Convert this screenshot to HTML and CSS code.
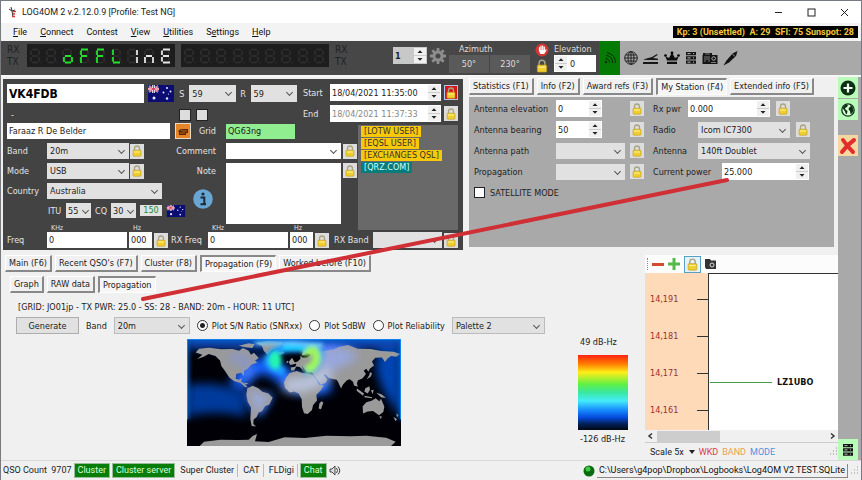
FILE: index.html
```html
<!DOCTYPE html>
<html lang="en">
<head>
<meta charset="utf-8">
<title>LOG4OM 2</title>
<link rel="stylesheet" href="styles.css">
</head>
<body>
<svg class="defs" width="0" height="0" aria-hidden="true">
  <symbol id="lock" viewBox="0 0 12 12"><path d="M3.5 6V3.500a2.500 2.500 0 0 1 5 0V6" fill="none" stroke="#aaa484" stroke-width="1.3"/><rect x="2" y="5.2" width="8" height="6" rx=".8" fill="#efcf2d" stroke="#bd9b22" stroke-width=".6"/><path d="M3 7h6" stroke="#fff29b"/></symbol>
  <symbol id="spin" viewBox="0 0 12 15"><rect width="12" height="15" fill="#f0f0f0"/><path d="M0 7.5h12" stroke="#bbb" stroke-width=".7"/><path d="M3.5 5 6 2.3 8.500 5zM3.500 10 6 12.700 8.500 10z" fill="#222"/></symbol>
  <symbol id="flag" viewBox="0 0 26 17"><rect width="26" height="17" fill="#0b0d72"/><path d="M1 1l9 6M10 1 1 7" stroke="#eee" stroke-width="1.600"/><path d="M5.500 0v8M0 4h11" stroke="#fff" stroke-width="2.600"/><path d="M5.500 0v8M0 4h11M1 1l9 6M10 1 1 7" stroke="#d43655" stroke-width=".9"/><g fill="#e6e9ff"><circle cx="6" cy="13" r="1.500"/><circle cx="19" cy="3" r="1"/><circle cx="15.500" cy="7.500" r="1"/><circle cx="22.500" cy="6.500" r="1"/><circle cx="20.500" cy="9" r=".6"/><circle cx="19" cy="13.500" r="1.200"/></g></symbol>
  <symbol id="seg" viewBox="0 0 12 16"><path d="M2 1.500H8M9 2.500V7M9 9V13.500M2 14.500H8M1 9V13.500M1 2.500V7M2 8H8M10.500 14.500h1" fill="none" stroke="currentColor" stroke-width="1.600"/></symbol>
  <symbol id="rack" viewBox="0 0 12 14"><path d="M1 1h10v3.200H1zM1 5.300h10v3.200H1zM1 9.600h10v3.200H1z" fill="#151515"/><path d="M2.500 2.600h3M2.500 6.900h3M2.500 11.200h3M8 2.600h1M8 6.900h1M8 11.200h1" stroke="#ccc" stroke-width=".9"/></symbol>
</svg>
<div class="app">
  <header class="title">
    <svg width="10" height="12" viewBox="0 0 10 12"><path d="M1 3l3 2 1 6M4 5l3-1M3 1l1 4" fill="none" stroke="#333"/><path d="M5 5.500h3M5 8h2M4 10.500h3" stroke="#d33" stroke-width="1.500"/></svg>
    <span class="grow">LOG4OM 2 v.2.12.0.9 [Profile: Test NG]</span>
    <button aria-label="Minimize"><svg width="9" height="9"><path d="M1 4.500h7" stroke="#222"/></svg></button>
    <button aria-label="Maximize"><svg width="9" height="9"><rect x="1" y="1" width="7" height="7" fill="none" stroke="#222"/></svg></button>
    <button aria-label="Close"><svg width="9" height="9"><path d="M1 1l7 7M8 1 1 8" stroke="#222"/></svg></button>
  </header>
  <nav class="menu">
    <a href="#"><u>F</u>ile</a><a href="#"><u>C</u>onnect</a><a href="#">Contest</a><a href="#"><u>V</u>iew</a><a href="#"><u>U</u>tilities</a><a href="#">S<u>e</u>ttings</a><a href="#"><u>H</u>elp</a>
    <span class="kp">Kp: 3 (Unsettled)&nbsp; A: 29&nbsp; SFI: 75 Sunspot: 28</span>
  </nav>
  <div class="toolbar">
    <div class="radio">
      <div class="rxtx"><span>RX</span><span>TX</span></div>
      <svg class="display" viewBox="0 0 148 23" role="img" aria-label="oFFLInE">
        <rect width="148" height="23" fill="#1d1d1d"/>
        <g color="#303030"><use href="#seg" x="3" y="4" width="12" height="16"/><use href="#seg" x="19" y="4" width="12" height="16"/><use href="#seg" x="35" y="4" width="12" height="16"/><use href="#seg" x="52" y="4" width="12" height="16"/><use href="#seg" x="68" y="4" width="12" height="16"/><use href="#seg" x="84" y="4" width="12" height="16"/><use href="#seg" x="100" y="4" width="12" height="16"/><use href="#seg" x="117" y="4" width="12" height="16"/><use href="#seg" x="133" y="4" width="12" height="16"/></g>
        <g fill="none" stroke="#1ee32b" stroke-width="1.800"><path d="M38 12h6M45 13v5M38 18.500h6M37 13v5"/><path d="M54 5.500h7M54 6.500V11M54 12h6M54 13v6"/><path d="M70 5.500h7M70 6.500V11M70 12h6M70 13v6"/><path d="M86 5.500V11M86 13v4.500M86 18.500h7"/></g>
        <g fill="none" stroke="#e4e4e4" stroke-width="1.800"><path d="M110 6v5M110 13v6"/><path d="M118 13v6M119 12h6M126 13v6"/><path d="M136 5.500h7M135 6.500V11M136 12h6M135 13v4.500M136 18.500h7"/></g>
      </svg>
      <svg class="display" viewBox="0 0 148 23" role="img" aria-label="Second VFO">
        <rect width="148" height="23" fill="#1d1d1d"/>
        <g color="#303030"><use href="#seg" x="3" y="4" width="12" height="16"/><use href="#seg" x="19" y="4" width="12" height="16"/><use href="#seg" x="35" y="4" width="12" height="16"/><use href="#seg" x="52" y="4" width="12" height="16"/><use href="#seg" x="68" y="4" width="12" height="16"/><use href="#seg" x="84" y="4" width="12" height="16"/><use href="#seg" x="100" y="4" width="12" height="16"/><use href="#seg" x="117" y="4" width="12" height="16"/><use href="#seg" x="133" y="4" width="12" height="16"/></g>
      </svg>
      <div class="rxtx"><span>RX</span><span>TX</span></div>
    </div>
    <div class="rotor">
      <span class="num vfo"><input aria-label="Radio number" value="1"><svg><use href="#spin"/></svg></span>
      <svg class="gear" viewBox="0 0 16 16"><circle cx="8" cy="8" r="4" fill="none" stroke="#8d8d8d" stroke-width="3"/><path d="M8 0v3M8 13v3M0 8h3M13 8h3M2.300 2.300l2.200 2.200M11.500 11.500l2.200 2.200M13.700 2.300l-2.200 2.200M4.500 11.500l-2.200 2.200" stroke="#8d8d8d" stroke-width="2.800"/></svg>
      <div class="azimuth"><span>Azimuth</span><div class="pair"><button>50°</button><button>230°</button></div></div>
      <div class="stops">
        <svg viewBox="0 0 14 14"><circle cx="7" cy="7" r="6.500" fill="#d83535"/><path d="M4.500 8V4.500M6 7V3M7.700 7V3M9.300 7V4M4.300 7l1.500 3.500h3L11 7" fill="#fff" stroke="#fff" stroke-width="1.200" stroke-linecap="round"/></svg>
        <svg viewBox="0 0 12 12"><use href="#lock"/></svg>
      </div>
      <div class="elev"><label for="elev">Elevation</label><span class="num"><svg><use href="#spin"/></svg><input id="elev" value="0"></span></div>
    </div>
    <div class="signal"><svg width="12" height="12" viewBox="0 0 12 12" fill="none" stroke="#0a2b0a"><circle cx="2" cy="10" r=".9" fill="#0a2b0a"/><path d="M1.500 6.500a4 4 0 0 1 4 4.500M2 3.500a6.500 6.500 0 0 1 6.500 7.500M3 .8a9 9 0 0 1 8.300 10.200"/></svg></div>
    <div class="tools">
      <svg width="14" height="14" viewBox="0 0 14 14" fill="none" stroke="#222"><circle cx="7" cy="7" r="6.300"/><ellipse cx="7" cy="7" rx="3" ry="6.300"/><path d="M7 .7v12.600M.7 7h12.600M1.600 4h10.800M1.600 10h10.800"/></svg>
      <svg width="16" height="14" viewBox="0 0 16 14"><path d="M0 11h15v2H0zM0 8.500 9 6l5-3 .6 1-4.600 3 5 .8V9H4z" fill="#181818"/></svg>
      <svg width="16" height="14" viewBox="0 0 16 14"><path d="M3 9.500 1.400 5.300 5 7 7.500 2.500h1L11 7l3.600-1.700L13 9.500zM3 10.700h10V13H3z" fill="#0c0c0c"/><circle cx="1.500" cy="4.500" r="1.300"/><circle cx="8" cy="1.800" r="1.400"/><circle cx="14.500" cy="4.500" r="1.300"/></svg>
      <svg width="12" height="14"><use href="#rack"/></svg>
      <svg width="16" height="13" viewBox="0 0 16 13"><path d="M1 3V1h9v2h5.500v9H.5V3z" fill="#141414"/><path d="M2 5h6M2 7h6M2 9h2M6 9h2M3 2h5M9 10.500h5" stroke="#aaa" stroke-width=".7"/><circle cx="11.700" cy="6.500" r="1.800" fill="none" stroke="#ccc" stroke-width=".8"/></svg>
      <svg width="15" height="15" viewBox="0 0 15 15"><path d="m.5 14.500 3-5 6-7L14.500 0 13 5 6 11.500z" fill="#111"/><path d="m9 2.500 3 3" stroke="#999"/></svg>
    </div>
  </div>

  <div class="main">
    <div class="work">
      <div class="upper">
        <section class="qso">
          <div class="top">
            <div class="call">
              <div class="row big"><input class="callsign" aria-label="Callsign" value="VK4FDB"><svg class="flag"><use href="#flag"/></svg><label for="s">S</label><span class="sel"><select id="s"><option>59</option></select></span><label for="r">R</label><span class="sel"><select id="r"><option>59</option></select></span></div>
              <div class="row dash"><span class="grow">-</span><input type="checkbox" aria-label="Flag A"><input type="checkbox" aria-label="Flag B"></div>
            </div>
            <div class="times">
              <div class="row"><label for="start">Start</label><span class="num date"><input id="start" value="18/04/2021 11:35:00"><svg><use href="#spin"/></svg></span><button class="lk red" aria-label="Lock start"><svg><use href="#lock"/></svg></button></div>
              <div class="row"><label for="end">End</label><span class="num date off"><input id="end" value="18/04/2021 11:37:33"><svg><use href="#spin"/></svg></span><button class="lk" aria-label="Lock end"><svg><use href="#lock"/></svg></button></div>
            </div>
          </div>
          <div class="mid">
            <div class="fields">
              <div class="row"><input class="name" aria-label="Name" value="Faraaz R De Belder"><button class="lk orange" aria-label="QSL"><svg viewBox="0 0 12 12"><path d="M1 6l3-2h7v4H9v2H2V7z" fill="#55290a"/><path d="M4 5l2 1h4M3 8h5" stroke="#e38628" fill="none" stroke-width=".7"/></svg></button><label class="gl" for="grid">Grid</label><input id="grid" class="grid" value="QG63ng"></div>
              <div class="cols">
                <div class="c1">
                  <div class="row"><label for="band">Band</label><span class="sel w82"><select id="band"><option>20m</option></select></span><button class="lk" aria-label="Lock band"><svg><use href="#lock"/></svg></button></div>
                  <div class="row"><label for="mode">Mode</label><span class="sel w82"><select id="mode"><option>USB</option></select></span><button class="lk" aria-label="Lock mode"><svg><use href="#lock"/></svg></button></div>
                  <div class="row"><label for="country">Country</label><span class="sel w115"><select id="country"><option>Australia</option></select></span></div>
                  <div class="row zones"><label for="itu">ITU</label><span class="sel"><select id="itu"><option>55</option></select></span><label for="cq">CQ</label><span class="sel"><select id="cq"><option>30</option></select></span><output>150</output><svg class="flag2"><use href="#flag"/></svg></div>
                </div>
                <div class="c2">
                  <div class="row"><label for="comment">Comment</label><span class="sel white"><select id="comment"><option></option></select></span><button class="lk" aria-label="Lock comment"><svg><use href="#lock"/></svg></button></div>
                  <div class="row note"><div class="nl"><label for="note">Note</label><svg width="20" height="20" viewBox="0 0 20 20"><circle cx="10" cy="10" r="9.800" fill="#68a6d6"/><circle cx="10" cy="5" r="1.600" fill="#1d2b38"/><path d="M7.500 8.500h3.800V15H13M7.500 15.200h5.500" fill="none" stroke="#1d2b38" stroke-width="2"/></svg></div><textarea id="note"></textarea><button class="lk" aria-label="Lock note"><svg><use href="#lock"/></svg></button></div>
                </div>
              </div>
            </div>
            <div class="tags"><span>[LOTW USER]</span><span>[EQSL USER]</span><span>[EXCHANGES QSL]</span><span class="teal">[QRZ.COM]</span></div>
          </div>
          <div class="freq">
            <label class="fl" for="khz">Freq</label>
            <span class="unit k"><small>KHz</small><input id="khz" value="0"></span><span class="unit h"><small>Hz</small><input aria-label="Hz" value="000"></span><button class="lk" aria-label="Lock frequency"><svg><use href="#lock"/></svg></button>
            <label class="rf" for="rkhz">RX Freq</label>
            <span class="unit k"><small>KHz</small><input id="rkhz" value="0"></span><span class="unit h"><small>Hz</small><input aria-label="RX Hz" value="000"></span><button class="lk" aria-label="Lock RX frequency"><svg><use href="#lock"/></svg></button>
            <label class="rb" for="rxband">RX Band</label><span class="sel grow"><select id="rxband"><option></option></select></span><button class="lk" aria-label="Lock RX band"><svg><use href="#lock"/></svg></button>
          </div>
        </section>
        <section class="station">
          <div class="tabs"><button>Statistics (F1)</button><button>Info (F2)</button><button>Award refs (F3)</button><button class="on">My Station (F4)</button><button>Extended info (F5)</button></div>
          <div class="spanel">
            <div class="sl">
              <div class="row"><label for="ae">Antenna elevation</label><span class="num w46"><input id="ae" value="0"><svg><use href="#spin"/></svg></span><button class="lk" aria-label="Lock elevation"><svg><use href="#lock"/></svg></button></div>
              <div class="row"><label for="ab">Antenna bearing</label><span class="num w46"><input id="ab" value="50"><svg><use href="#spin"/></svg></span><button class="lk" aria-label="Lock bearing"><svg><use href="#lock"/></svg></button></div>
              <div class="row"><label for="ap">Antenna path</label><span class="sel w69"><select id="ap"><option></option></select></span><button class="lk" aria-label="Lock path"><svg><use href="#lock"/></svg></button></div>
              <div class="row"><label for="pr">Propagation</label><span class="sel w69"><select id="pr"><option></option></select></span><button class="lk" aria-label="Lock propagation"><svg><use href="#lock"/></svg></button></div>
              <div class="row sat"><input type="checkbox" id="sat"><label for="sat">SATELLITE MODE</label></div>
            </div>
            <div class="sr">
              <div class="row"><label for="rp">Rx pwr</label><span class="num w82"><input id="rp" value="0.000"><svg><use href="#spin"/></svg></span><button class="lk" aria-label="Lock power"><svg><use href="#lock"/></svg></button></div>
              <div class="row wide"><label for="ra">Radio</label><span class="sel w92"><select id="ra"><option>Icom IC7300</option></select></span><button class="lk" aria-label="Lock radio"><svg><use href="#lock"/></svg></button></div>
              <div class="row wide"><label for="an">Antenna</label><span class="sel w112"><select id="an"><option>140ft Doublet</option></select></span></div>
              <div class="row cp"><label for="pw">Current power</label><span class="num w87"><input id="pw" value="25.000"><svg><use href="#spin"/></svg></span></div>
            </div>
          </div>
        </section>
      </div>
      <div class="lower">
        <section class="prop">
          <div class="tabs"><button>Main (F6)</button><button>Recent QSO's (F7)</button><button>Cluster (F8)</button><button class="on">Propagation (F9)</button><button>Worked before (F10)</button></div>
          <div class="tabs inner"><button>Graph</button><button>RAW data</button><button class="on">Propagation</button></div>
          <p>[GRID: JO01jp - TX PWR: 25.0 - SS: 28 - BAND: 20m - HOUR: 11 UTC]</p>
          <div class="plot"><button>Generate</button><label for="pb">Band</label><span class="sel w76"><select id="pb"><option>20m</option></select></span>
            <label class="rd"><input type="radio" name="p" checked>Plot S/N Ratio (SNRxx)</label><label class="rd"><input type="radio" name="p">Plot SdBW</label><label class="rd"><input type="radio" name="p">Plot Reliability</label>
            <span class="sel w93"><select aria-label="Palette"><option>Palette 2</option></select></span></div>
          <div class="result">
            <svg class="map" viewBox="22 27 642 320" preserveAspectRatio="none" role="img" aria-label="Propagation map">
              <defs><filter id="b1" x="-50%" y="-50%" width="200%" height="200%"><feGaussianBlur stdDeviation="14"/></filter><filter id="b2" x="-50%" y="-50%" width="200%" height="200%"><feGaussianBlur stdDeviation="6"/></filter></defs>
              <rect x="22" y="27" width="642" height="320" fill="#000006"/>
              <g fill="none" filter="url(#b1)">
                <path d="M22 165Q120 150 190 190L200 260Q100 235 22 260z" fill="#063a9c"/>
                <path d="M22 40H664" stroke="#0a55d8" stroke-width="30"/>
                <path d="M600 60Q560 130 664 260V60z" fill="#0644b4"/>
                <path d="M170 170Q230 70 300 130T450 160" stroke="#1464ff" stroke-width="50"/>
                <path d="M190 190Q240 200 285 190L240 260z" fill="#1464ff"/>
                <path d="M400 60Q480 40 560 80L430 140z" fill="#2d62f0"/>
              </g>
              <g fill="#9a9a9a">
                <path d="M48 67 58 56 88 53 125 58 158 57 178 62 190 54 207 62 214 74 223 68 237 84 226 92 233 97 215 104 204 116 194 122 192 138 185 128 170 132 168 146 178 149 186 144 185 155 196 162 204 172 195 170 182 158 164 153 149 142 137 124 125 108 121 91 107 78 87 72 72 80 53 87 68 74z"/>
                <path d="M177 47 207 40 225 43 218 54 198 52zM229 39 265 32 309 36 300 53 277 61 264 75 252 62 247 48zM292 68l16-5 7 6-14 5zM190 157l17 3-8 3z"/>
                <path d="M203 174 219 167 236 174 248 185 266 190 279 203 269 223 256 228 247 243 237 247 231 260 222 268 221 281 229 289 216 287 212 267 214 232 204 215 200 194z"/>
                <path d="M335 121 333 112 347 110 350 102 342 98 354 94 363 85 361 78 371 83 382 82 393 75 383 69 374 75 366 76 370 64 386 57 401 61 410 67 438 62 463 58 479 50 505 45 534 56 573 57 605 63 642 65 662 72 650 80 634 78 623 86 616 96 607 82 587 83 577 94 583 106 571 115 566 125 560 116 552 122 559 132 548 145 535 150 532 159 534 170 523 166 520 155 510 147 502 150 490 163 484 175 476 157 471 149 456 146 446 143 439 133 431 134 443 148 438 158 424 164 411 148 401 133 397 126 382 125 373 117 366 106 373 123 360 111 350 109 343 121z"/>
                <path d="M319 143 330 129 351 123 368 129 384 130 401 135 413 155 418 164 432 166 423 181 410 194 412 211 400 225 397 239 384 251 373 249 367 230 366 207 357 190 344 184 330 187 316 173 313 158zM425 213l6 4-7 20-7-2 2-15zM327 96l10-13 7 12 4 6-16 4zM322 91l5 5-7 4z"/>
                <path d="M571 126l6 4-4 10-12 7 8-12zM532 175l21 15-3 7-19-15zM557 174l12-6 2 11-7 11-10-6zM555 197l23 4-2 3-22-3zM574 180l8-1-3 13zM590 188l15 4 14 11-14-1zM549 228 560 216 576 212 588 204 599 213 604 206 614 229 611 245 598 255 580 242 564 244 550 250zM599 258l8 1-4 7zM641 260l11 6-4 7zM650 250l7 4-5 8z"/>
                <path d="M60 347 73 334 122 328 175 329 207 328 220 316 232 311 226 333 267 335 315 321 375 323 440 316 512 318 560 316 620 322 648 334 634 347z"/>
              </g>
              <g fill="none" filter="url(#b1)" opacity=".65"><path d="M400 60Q480 30 540 80L430 140z" fill="#96aeff"/><path d="M205 180L270 195 235 255z" fill="#9ab2ff"/><path d="M150 85Q220 70 200 145" stroke="#7a94ee" stroke-width="22"/><path d="M315 160Q370 180 450 125" stroke="#c8d8ff" stroke-width="46"/></g>
              <g fill="none" filter="url(#b2)"><path d="M315 126Q255 108 268 82 290 50 350 53 430 42 417 82 412 119 374 122" stroke="#1b9cff" stroke-width="26"/><ellipse cx="287" cy="90" rx="19" ry="26" fill="#22f5b0"/><path d="M370 70Q410 48 411 79T378 119" stroke="#9cf65c" stroke-width="25"/><path d="M310 55Q345 46 378 60" stroke="#15dcff" stroke-width="12"/><path d="M225 38L340 35 430 45" stroke="#7bd6ff" stroke-width="12"/></g>
              <path d="M22 28H664M23 27V267M663 27V267" fill="none" stroke="#087cff" stroke-width="8" filter="url(#b2)"/>
              <path d="M22 28H664M23 27V267M663 27V267" fill="none" stroke="#168eff" stroke-width="3"/>
            </svg>
            <div class="legend"><span>49 dB-Hz</span><div class="bar"></div><span>-126 dB-Hz</span></div>
          </div>
        </section>
        <section class="bandmap">
          <div class="btools"><i></i><svg width="12" height="10"><rect x="0" y="4" width="12" height="3" fill="#d34a2c"/></svg><svg width="12" height="12"><path d="M6 0v12M0 6h12" stroke="#55b84a" stroke-width="3"/></svg><button aria-label="Lock band map"><svg width="13" height="13"><use href="#lock"/></svg></button><svg width="12" height="12" viewBox="0 0 12 12"><path d="M0 1h5l1 1.500h5V11H1L0 9z" fill="#333"/><circle cx="7" cy="7" r="2" fill="none" stroke="#ddd"/></svg></div>
          <div class="scale"><ul><li>14,191</li><li>14,181</li><li>14,171</li><li>14,161</li></ul><div class="spots"><div class="spot"><hr><b>LZ1UBO</b></div></div></div>
          <div class="scroll"><svg width="12" height="12"><path d="M7 3.500 4 6l3 2.500" fill="none" stroke="#333" stroke-width="1.500"/></svg><i></i><svg width="12" height="12"><path d="m5 3.500 3 2.500-3 2.500" fill="none" stroke="#333" stroke-width="1.500"/></svg></div>
          <div class="bfoot"><span>Scale 5x</span><svg width="6" height="4"><path d="M0 0h6L3 4z" fill="#222"/></svg><span class="wkd">WKD</span><span class="bnd">BAND</span><span class="mod">MODE</span><svg class="grip" width="9" height="9"><path d="M7 1h1M4 4h1M7 4h1M1 7h1M4 7h1M7 7h1" stroke="#888" stroke-width="1"/></svg></div>
        </section>
      </div>
    </div>
    <aside>
      <button aria-label="Add"><svg viewBox="0 0 18 18"><circle cx="9" cy="9" r="7.500" fill="#0d3015"/><path d="M9 4.500v9M4.500 9h9" stroke="#f1fff0" stroke-width="2.200"/></svg></button>
      <button aria-label="World"><svg viewBox="0 0 18 18"><circle cx="9" cy="9" r="6.200" fill="#d9ffd9" stroke="#0d3015" stroke-width="1.300"/><path d="M3.500 7l3-3.500 2.500.5-1 2-2 1 .5 1.500 2 1.500-.5 2.500-1 1-1-3zM11 4l2.500 1.500 1 4-1.500 3-1.500.5-.5-3-1.500-1.500.5-2 1.500-.5z" fill="#0d3015"/></svg></button>
      <button class="del" aria-label="Clear"><svg viewBox="0 0 18 18"><path d="M4 3Q8 9 14 15M15 3Q8 8 3 15" stroke="#e32d2d" stroke-width="4" stroke-linecap="round" fill="none"/></svg></button>
      <button class="last" aria-label="Lists"><svg viewBox="-3 -3 18 20"><use href="#rack" width="12" height="14"/></svg></button>
    </aside>
    <svg class="arrow" viewBox="0 0 590 126" aria-hidden="true"><path d="M3 122 587 3" stroke="#cf2f35" stroke-width="4" stroke-linecap="round"/></svg>
  </div>
  <footer>
    <span class="qc">QSO Count&nbsp; 9707</span><span class="g">Cluster</span><span class="g">Cluster server</span><span class="c">Super Cluster</span><span class="c">CAT</span><span class="c">FLDigi</span><span class="g">Chat</span>
    <svg width="12" height="11" viewBox="0 0 12 11"><path d="M1 4h2l3-3v9L3 7H1z" fill="#ddd" stroke="#222" stroke-width=".8"/><path d="M7.500 3q2 2.500 0 5M9 1.500q3.500 4 0 8" fill="none" stroke="#222" stroke-width=".9"/></svg>
    <span class="grow"></span>
    <svg width="12" height="12"><circle cx="6" cy="6" r="5.500" fill="#0b6b10"/><circle cx="5" cy="4" r="2.500" fill="#3fc745"/></svg>
    <a href="#" class="path">C:\Users\g4pop\Dropbox\Logbooks\Log4OM V2 TEST.SQLite</a>
    <svg width="9" height="9"><path d="M7 1h1M4 4h1M7 4h1M1 7h1M4 7h1M7 7h1" stroke="#999" stroke-width="1"/></svg>
  </footer>
</div>
</body>
</html>
```
FILE: styles.css
```css
* { box-sizing: border-box; }
body { margin: 0; background: #f0f0f0; color: #222; font: 9px/12px "DejaVu Sans Condensed", "DejaVu Sans", sans-serif; }
button, input, select, textarea { font: inherit; color: inherit; margin: 0; padding: 0; border: 0; border-radius: 0; min-width: 0; }
button { white-space: nowrap; }
label, span { white-space: nowrap; }
svg { display: block; flex: none; }
.defs { position: absolute; }
.grow { flex: 1; }
.app { min-height: 100vh; display: flex; flex-direction: column; border: 1px solid #777a80; border-bottom: 0; }
.title { height: 22px; background: #fff; display: flex; align-items: center; padding: 0 2px 0 7px; gap: 4px; font: 9px/14px Roboto, sans-serif; }
.title button { background: none; width: 29px; height: 20px; display: grid; place-items: center; }
.menu { height: 18px; background: #f3f3f3; display: flex; align-items: center; gap: 13px; padding: 0 3px 0 12px; font: 9px/14px Roboto, sans-serif; }
.menu a { color: #111; text-decoration: none; }
.kp { margin-left: auto; background: #000; color: #f3c63c; font: bold 9px/12px Roboto, sans-serif; padding: 0 4px; }
.toolbar { height: 34px; display: flex; background: #a9a9a9; }
.radio { background: #474747; display: flex; gap: 6px; align-items: flex-start; padding: 3px 0 0 6px; width: 392px; }
.rxtx { width: 14px; font-size: 10px; color: #222; display: flex; flex-direction: column; }
.display { width: 148px; height: 23px; }
.rotor { background: #474747; display: flex; gap: 3px; width: 206px; padding-top: 2px; color: #ddd; }
.num { display: flex; background: #fff; color: #222; height: 17px; }
.num input { flex: 1; width: 10px; background: none; padding: 0 2px; }
.num svg { width: 12px; height: 15px; margin: 1px; }
.vfo { width: 34px; margin-top: 4px; background: #c8c8c8; font-weight: bold; }
.gear { width: 16px; height: 16px; margin-top: 5px; }
.azimuth > span { margin-left: 10px; }
.pair { display: flex; gap: 1px; }
.pair button { width: 40px; height: 18px; background: #5a5a5a; }
.stops svg { width: 14px; height: 14px; margin: 0 2px 2px; }
.elev { display: flex; flex-direction: column; width: 42px; }
.elev input { background: #fff; height: 15px; margin-top: 1px; }
.signal { width: 21px; background: #057a05; display: grid; place-items: center; }
.tools { display: flex; align-items: center; gap: 5px; padding-left: 4px; }
.main { flex: 1; display: flex; position: relative; border-top: 2px solid #f6f6f6; }
.work { flex: 1; min-width: 0; }
.upper { display: flex; padding: 2px 4px 0 2px; gap: 6px; }
.qso { width: 460px; height: 171px; background: #434343; color: #e4e4e4; padding: 5px 5px 0 4px; display: flex; flex-direction: column; }
.qso input, .qso select, .qso textarea { color: #222; }
.qso .off input { color: #888; }
.row { display: flex; align-items: center; height: 16px; }
.top { display: flex; height: 39px; }
.call { width: 290px; }
.row.big { height: 19px; gap: 4px; }
.big .sel { width: 47px; height: 17px; }
.big .flag { width: 26px; height: 17px; }
.big label { width: 7px; text-align: center; }
.big .callsign { width: 139px; height: 19px; background: #fff; color: #000; padding: 0 2px; font: bold 12px/18px "DejaVu Sans Condensed", sans-serif; }
.row.dash { padding: 4px 89px 0 4px; gap: 5px; height: 20px; }
input[type=checkbox] { appearance: none; width: 12px; height: 12px; background: #ddd; border: 1px solid #222; }
.times { display: flex; flex-direction: column; gap: 4px; padding-left: 6px; flex: 1; }
.times .row { height: 17px; gap: 3px; }
.times label { flex: 1; }
.date { width: 111px; height: 17px; }
.lk { width: 14px; height: 15px; background: #ddd; display: grid; place-items: center; flex: none; }
.lk svg { width: 12px; height: 12px; }
.red { background: #d81818; border: 1px solid #b7c4ee; }
.orange { background: #e28427; width: 16px; height: 16px; border: 1px solid #e8dac8; }
.sel { display: flex; position: relative; height: 16px; background: #e1e1e1; color: #222; }
.sel select { appearance: none; width: 100%; height: 100%; background: none; padding: 0 3px; }
.sel::after { content: ""; position: absolute; right: 5px; top: 5px; width: 4px; height: 4px; border: solid #555; border-width: 0 1px 1px 0; transform: rotate(45deg); pointer-events: none; }
.w46 { width: 46px; }
.w69 { width: 69px; }
.w76 { width: 76px; }
.w82 { width: 82px; }
.w87 { width: 87px; }
.w92 { width: 92px; }
.w93 { width: 93px; }
.w112 { width: 112px; }
.w115 { width: 115px; }
.mid { display: flex; height: 107px; gap: 2px; }
.fields { width: 349px; display: flex; flex-direction: column; gap: 4px; }
.name { width: 163px; height: 16px; background: #fff; padding: 0 2px; }
.fields .orange { margin-left: 5px; }
.gl { width: 35px; padding-left: 8px; }
.grid { width: 69px; height: 15px; background: #90ee90; padding: 0 2px; }
.cols { display: flex; }
.c1 { width: 168px; display: flex; flex-direction: column; gap: 4px; }
.c1 .row > label:first-child { width: 40px; }
.c1 .lk { margin-left: 1px; }
.row.zones { padding-left: 41px; gap: 4px; height: 15px; }
.row.zones > * { flex: none; }
.row.zones > label:first-child { width: 14px; }
.zones .sel { width: 25px; height: 15px; }
.zones select { padding: 0 2px; }
.zones .sel::after { right: 3px; }
.zones output { background: #e2e2e2; color: #248a35; width: 22px; height: 11px; line-height: 11px; text-align: center; }
.zones svg { width: 20px; height: 12px; }
.c2 { flex: 1; display: flex; flex-direction: column; gap: 4px; }
.c2 .row > label, .nl { width: 51px; padding-right: 10px; text-align: right; }
.c2 .sel { width: 115px; }
.c2 .lk { margin-left: 2px; }
.white { background: #fff; }
.row.note { height: 61px; align-items: flex-start; }
.nl { display: flex; flex-direction: column; gap: 10px; line-height: 16px; }
.nl svg { margin-left: 18px; }
.c2 textarea { width: 115px; height: 61px; background: #fff; resize: none; }
.tags { flex: 1; background: #696969; margin-top: 2px; padding: 0 3px; display: flex; flex-direction: column; align-items: flex-start; }
.tags span { background: #f8c90a; color: #333; padding: 0 3px; line-height: 11px; margin-top: 1px; }
.tags .teal { background: #087c7c; color: #cff; }
.freq { display: flex; align-items: flex-end; margin-top: -6px; gap: 2px; height: 24px; }
.freq > label { line-height: 15px; }
.fl { width: 38px; }
.rf { width: 36px; padding-left: 1px; }
.rb { width: 40px; padding-left: 3px; }
.unit { display: flex; flex-direction: column; }
.unit small { font-size: 7px; line-height: 8px; padding-left: 4px; }
.unit input { width: 100%; height: 16px; background: #fff; padding: 0 2px; }
.k { width: 80px; }
.h { width: 23px; }
.station { flex: 1; min-width: 0; }
.tabs { display: flex; gap: 3px; margin-top: -1px; }
.tabs button { height: 17px; padding: 0 3px; background: #f0f0f0; border: solid; border-width: 1px 2px 2px 1px; border-color: #fff #888 #888 #fff; }
.tabs .on { border-color: #888 #fff #fff #888; border-width: 2px 1px 1px 2px; background: #f6f6f6; }
.spanel { background: #a9a9a9; height: 150px; margin-top: 2px; padding: 3px 5px; display: flex; gap: 9px; }
.sl, .sr { display: flex; flex-direction: column; gap: 4px; }
.sl { width: 170px; }
.sl .row, .sr .row { height: 17px; }
.sl .row > label:first-child { width: 82px; }
.sl .row .lk { margin-left: auto; }
.sl .row.sat { gap: 5px; }
.sat input { background: #fff; width: 11px; height: 11px; }
.sr .row > label { width: 35px; }
.sr .wide > label { width: 45px; }
.sr .cp > label { width: 69px; }
.sr .lk { margin-left: 6px; }
.lower { display: flex; justify-content: space-between; padding: 5px 0 0 4px; }
.prop { display: flex; flex-direction: column; }
.prop .tabs { margin-top: 0; }
.prop .inner { margin: 4px 0 0 5px; }
.prop p { margin: 8px 0 0 13px; }
.plot { display: flex; align-items: center; margin: 4px 0 0 11px; gap: 7px; height: 17px; }
.plot button { width: 63px; height: 17px; background: #e1e1e1; border: 1px solid #adadad; }
.plot .sel { border: 1px solid #bbb; height: 17px; }
.rd { display: flex; align-items: center; gap: 4px; }
.rd input { appearance: none; width: 11px; height: 11px; border: 1px solid #333; border-radius: 50%; background: #fff; }
.rd input:checked { background: radial-gradient(circle, #222 0 2px, #fff 3px); }
.result { display: flex; align-items: flex-start; margin: 5px 0 0 182px; }
.map { width: 214px; height: 107px; }
.legend { margin: -4px 0 0 177px; width: 50px; }
.legend span { padding-left: 2px; display: block; line-height: 14px; }
.bar { height: 75px; margin: 6px 0 2px; background: linear-gradient(#ff2212, #ff7e00 12%, #ffee18 23%, #60f044 39%, #38e8a2 50%, #45ecf8 61%, #178fff 73%, #064de0 83%, #032056 92%, #000814); }
.bandmap { width: 193px; display: flex; flex-direction: column; }
.btools { height: 18px; background: #fcfcfc; display: flex; align-items: center; gap: 4px; padding-left: 2px; }
.btools > i { height: 12px; border-left: 1px dotted #888; }
.btools button { width: 17px; height: 17px; background: #e5f2fa; border: 1px solid #57a0c4; display: grid; place-items: center; }
.scale { height: 157px; display: flex; background: #fff; }
.scale ul { width: 64px; margin: 0; padding: 8px 0 0 5px; list-style: none; background: #ffdab9; border-right: 1px solid #333; color: #983030; overflow: hidden; }
.scale li { height: 37px; line-height: 37px; display: flex; align-items: center; justify-content: space-between; }
.scale li::after { content: ""; width: 11px; border-top: 1px solid #333; }
.spots { flex: 1; border-top: 1px solid #333; padding-top: 102px; }
.spot { display: flex; align-items: center; gap: 5px; padding-left: 1px; color: #111; }
.spot hr { width: 62px; margin: 0; border: 0; border-top: 1px solid #449b4b; }
.scroll { height: 13px; display: flex; align-items: center; border-bottom: 1px solid #ccc; }
.scroll i { width: 63px; height: 11px; background: #cdcdcd; margin-right: auto; }
.bfoot { display: flex; align-items: center; gap: 4px; height: 17px; padding-left: 5px; font: 9px/12px Roboto, sans-serif; }
.bfoot svg { margin-left: 1px; }
.wkd { color: #d94040; }
.bnd { color: #e9a04c; }
.mod { color: #4c94e0; }
.bfoot .grip { margin-left: auto; }
aside { width: 23px; background: #a9a9a9; display: flex; flex-direction: column; gap: 1px; padding-right: 2px; }
aside button { width: 20px; height: 21px; background: #b9fbb9; display: grid; place-items: center; }
aside svg { width: 18px; height: 20px; }
aside .del { background: #f4d8a0; margin-top: 14px; }
aside .last { margin-top: auto; }
.arrow { position: absolute; left: 139px; top: 100px; width: 590px; height: 126px; pointer-events: none; fill: none; }
footer { height: 20px; border-top: 1px solid #d8d8d8; display: flex; align-items: center; gap: 2px; padding: 0 2px; font: 9px/13px Roboto, sans-serif; }
.g { background: #087d08; color: #d8ffd8; padding: 0 3px; border: 1px solid #9bbd9b; }
.c { padding: 0 3px; border-right: 1px solid #bbb; }
.path { color: #111; border: solid #888; border-width: 0 1px 1px 0; padding: 0 2px; text-decoration: none; }
```
